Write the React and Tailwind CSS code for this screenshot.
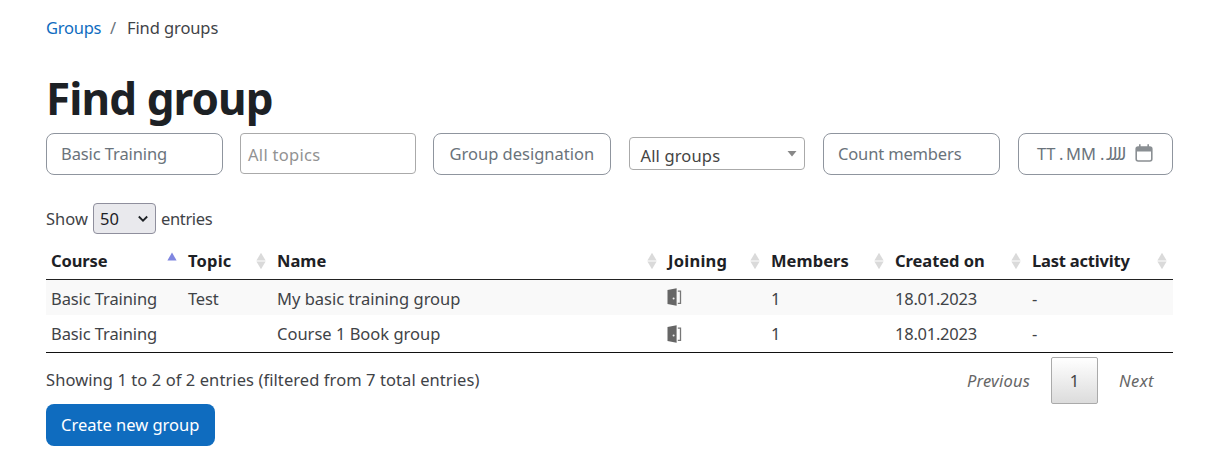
import React from "react";

const field = "flex h-[42px] shrink-0 items-center rounded-[8px] border border-[#8f959e] whitespace-nowrap text-[#6a737b]";

function SortIcon({ asc }) {
  return (
    <svg width="10" height="18" viewBox="0 0 10 18" className="mr-[6px] shrink-0">
      {asc ? (
        <path d="M5 .5 9.6 8.5H.4Z" fill="#7f86e0" />
      ) : (
        <>
          <path d="M5 .8 9.6 8.6H.4Z" fill="#dadada" />
          <path d="M5 17.2 9.6 9.4H.4Z" fill="#dadada" />
        </>
      )}
    </svg>
  );
}

function Door() {
  return (
    <svg width="15" height="18" viewBox="0 0 15 18" className="block">
      <path d="M.5 2 9.6.2v17.6L.5 16Z" fill="#666" />
      <circle cx="6.6" cy="10.5" r="1" fill="#eee" />
      <path d="M10.8 3.2h2.7v12.2h-2.7" fill="none" stroke="#777" strokeWidth="1.3" />
    </svg>
  );
}

const cols = "grid grid-cols-[137px_89px_391px_103px_124px_137px_146px]";
const heads = [
  ["Course", "tracking-[-0.1px]"],
  ["Topic", "tracking-[0.2px]"],
  ["Name", "tracking-[0px]"],
  ["Joining", "tracking-[0.25px]"],
  ["Members", "tracking-[0.05px]"],
  ["Created on", "tracking-[-0.05px]"],
  ["Last activity", "tracking-[-0.2px]"],
];
const rows = [
  ["Basic Training", "Test", "My basic training group"],
  ["Basic Training", "", "Course 1 Book group"],
];

export default function App() {
  return (
    <div className="h-[473px] w-[1205px] overflow-hidden bg-white pl-[46px] font-['Noto_Sans',sans-serif] text-[16.5px] leading-[24px] text-[#3f4347]">
      <nav className="mt-[16px] flex h-[24px] whitespace-nowrap">
        <a className="w-[64px] tracking-[-0.25px] text-[#0f6cbf]">Groups</a>
        <span className="w-[17px] text-[#6a737b]">/</span>
        <span className="tracking-[-0.1px]">Find groups</span>
      </nav>
      <h1 className="mt-[31px] h-[62px] text-[44px] leading-[54px] font-bold tracking-[-0.9px] text-[#1d2125] whitespace-nowrap">Find group</h1>

      <div className="flex h-[42px] w-[1127px]">
        <div className={field + " w-[177px] pl-[14px] tracking-[-0.1px]"}>Basic Training</div>
        <div className="ml-[17px] flex h-[41px] w-[177px] items-center rounded-[4px] border border-[#aaa] pt-[2px] pl-[7px] tracking-[0.3px] text-[#929292]">All topics</div>
        <div className={field + " ml-[17px] w-[178px] pl-[15px]"}>Group designation</div>
        <div className="mt-[4px] ml-[18px] flex h-[33px] w-[176px] items-center justify-between rounded-[4px] border border-[#aaa] pt-[4px] pr-[7px] pl-[10px] tracking-[0.15px] text-[#444]">
          All groups
          <svg width="10" height="6" viewBox="0 0 10 6" className="mb-[3px]"><path d="M.5 0h9L5 5.5Z" fill="#888" /></svg>
        </div>
        <div className={field + " ml-[18px] w-[177px] pl-[14px] tracking-[-0.15px]"}>Count members</div>
        <div className={field + " ml-[18px] w-[155px] pl-[18px]"}>
          <span className="w-[22px] tracking-[-0.3px]">TT</span>
          <span className="w-[7px]">.</span>
          <span className="w-[34px]">MM</span>
          <span className="w-[6px]">.</span>
          <span className="w-[29px] font-['Lato',sans-serif] tracking-[-2.3px]">JJJJ</span>
          <svg width="18" height="18" viewBox="0 0 18 18" className="mb-[2px]">
            <rect x="1.2" y="3" width="15.6" height="14" rx="2" fill="none" stroke="#8a8f93" strokeWidth="1.6" />
            <path d="M1 3h16v4.5H1ZM4 .3h1.6V4H4ZM12.4.3H14V4h-1.6Z" fill="#8a8f93" />
          </svg>
        </div>
      </div>

      <div className="mt-[28px] flex h-[31px] items-center whitespace-nowrap">
        <span className="w-[47px] shrink-0">Show</span>
        <span className="flex h-[31px] w-[63px] items-center justify-between rounded-[4px] border border-[#8f8f9d] bg-[#e9e9ed] pr-[6px] pl-[6px] text-[#1d2125]">
          50
          <svg width="12" height="8" viewBox="0 0 12 8"><path d="M1.8 1.5 6 5.7l4.2-4.2" fill="none" stroke="#1d2125" strokeWidth="1.8" /></svg>
        </span>
        <span className="ml-[5px] tracking-[-0.35px]">entries</span>
      </div>

      <div className="mt-[9px] w-[1127px]">
        <div className={cols + " h-[37px] border-b border-[#222] font-bold text-[#1d2125]"}>
          {heads.map(([label, track], i) => (
            <div key={label} className="flex items-center justify-between pl-[5px] whitespace-nowrap">
              <span className={track}>{label}</span>
              <SortIcon asc={i === 0} />
            </div>
          ))}
        </div>
        {rows.map((r, i) => (
          <div key={i} className={cols + " items-center whitespace-nowrap " + (i === 0 ? "h-[35px] bg-[#f9f9f9] pt-[2px]" : "h-[38px] border-b border-[#111]")}>
            <span className="pl-[5px] tracking-[-0.1px]">{r[0]}</span>
            <span className="pl-[5px] tracking-[-0.2px]">{r[1]}</span>
            <span className="pl-[5px]">{r[2]}</span>
            <span className={i === 0 ? "pb-[3px] pl-[4px]" : "pl-[4px]"}><Door /></span>
            <span className="pl-[5px]">1</span>
            <span className="pl-[5px] tracking-[-0.25px]">18.01.2023</span>
            <span className="pl-[5px]">-</span>
          </div>
        ))}
      </div>

      <div className="flex h-[51px] w-[1127px] whitespace-nowrap">
        <span className="mt-[15px] w-[921px] tracking-[0.08px]">Showing 1 to 2 of 2 entries (filtered from 7 total entries)</span>
        <span className="mt-[16px] w-[84px] tracking-[0.2px] text-[#666] italic">Previous</span>
        <span className="mt-[4px] flex h-[47px] w-[47px] items-center justify-center rounded-[2px] border border-[#aaa] bg-gradient-to-b from-white to-[#dcdcdc] pt-px text-[#444]">1</span>
        <span className="mt-[16px] ml-[21px] tracking-[0.4px] text-[#666] italic">Next</span>
      </div>
      <button className="flex h-[42px] w-[169px] items-center rounded-[8px] bg-[#0f6cbf] pl-[15px] text-white whitespace-nowrap">Create new group</button>
    </div>
  );
}
